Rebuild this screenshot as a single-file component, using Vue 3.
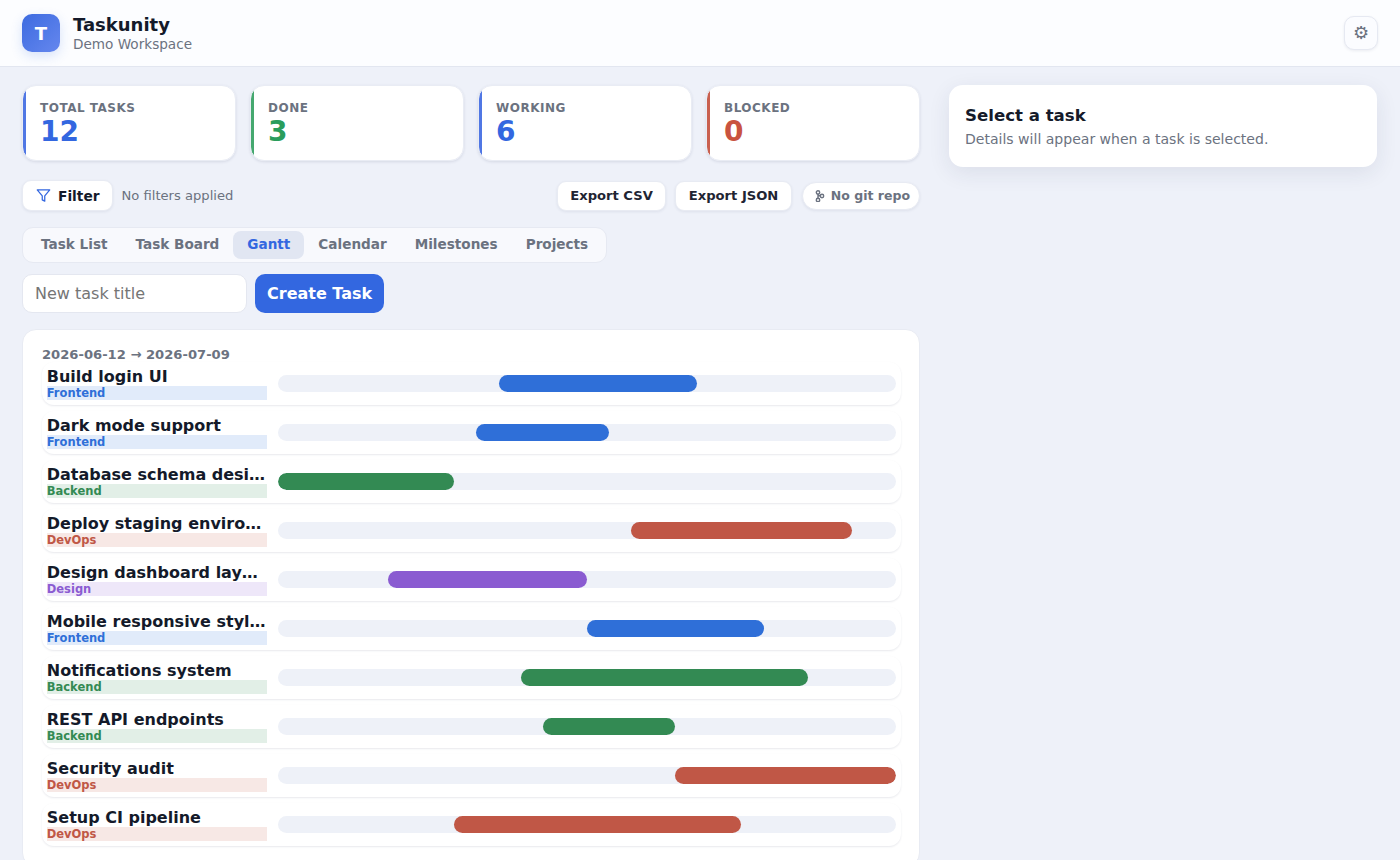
<script setup>
const stats = [
  { label: "Total Tasks", value: 12, accent: "#5077e4", color: "#3367e0" },
  { label: "Done", value: 3, accent: "#45a86f", color: "#2a9d5c" },
  { label: "Working", value: 6, accent: "#5077e4", color: "#3367e0" },
  { label: "Blocked", value: 0, accent: "#c9604f", color: "#c9533f" }
]

const tabs = ["Task List", "Task Board", "Gantt", "Calendar", "Milestones", "Projects"]

const colors = {
  Frontend: { text: "#2f6fd8", bg: "#e1ebfa" },
  Backend: { text: "#338a53", bg: "#e2efe7" },
  DevOps: { text: "#c05746", bg: "#f7e8e5" },
  Design: { text: "#8a5bd1", bg: "#eee7f9" }
}

const totalDays = 28

const tasks = [
  { title: "Build login UI", team: "Frontend", start: 10, days: 9 },
  { title: "Dark mode support", team: "Frontend", start: 9, days: 6 },
  { title: "Database schema design", team: "Backend", start: 0, days: 8 },
  { title: "Deploy staging environment", team: "DevOps", start: 16, days: 10 },
  { title: "Design dashboard layout", team: "Design", start: 5, days: 9 },
  { title: "Mobile responsive styling", team: "Frontend", start: 14, days: 8 },
  { title: "Notifications system", team: "Backend", start: 11, days: 13 },
  { title: "REST API endpoints", team: "Backend", start: 12, days: 6 },
  { title: "Security audit", team: "DevOps", start: 18, days: 10 },
  { title: "Setup CI pipeline", team: "DevOps", start: 8, days: 13 }
]

function barStyle(task) {
  return {
    marginLeft: (task.start / totalDays) * 100 + "%",
    width: (task.days / totalDays) * 100 + "%",
    background: colors[task.team].text
  }
}
</script>

<template>
  <div class="app">
    <header class="topbar">
      <div class="brand">
        <div class="logo">T</div>
        <div>
          <div class="brand-name">Taskunity</div>
          <div class="brand-sub">Demo Workspace</div>
        </div>
      </div>
      <button class="settings">⚙</button>
    </header>

    <main class="layout">
      <section class="left">
        <div class="stats">
          <div
            v-for="stat in stats"
            :key="stat.label"
            class="stat"
            :style="{ '--accent': stat.accent }"
          >
            <div class="stat-label">{{ stat.label }}</div>
            <div class="stat-value" :style="{ color: stat.color }">{{ stat.value }}</div>
          </div>
        </div>

        <div class="toolbar">
          <button class="filter-btn">
            <svg width="15" height="15" viewBox="0 0 24 24" fill="none" stroke="#3367e0" stroke-width="2" stroke-linejoin="round" stroke-linecap="round">
              <path d="M22 3H2l8 9.46V19l4 2v-8.54L22 3z" />
            </svg>
            Filter
          </button>
          <span class="filter-note">No filters applied</span>
          <div class="toolbar-right">
            <button class="small-btn">Export CSV</button>
            <button class="small-btn">Export JSON</button>
            <span class="git-pill">
              <svg width="12" height="12" viewBox="0 0 24 24" fill="none" stroke="#6b7280" stroke-width="2.8" stroke-linecap="round">
                <circle cx="8" cy="5" r="3.4" />
                <circle cx="8" cy="20" r="3.4" />
                <circle cx="16" cy="12" r="3.4" />
                <path d="M8 8v9M8 9c1 2 2 3 5 3" />
              </svg>
              No git repo
            </span>
          </div>
        </div>

        <nav class="tabs">
          <button
            v-for="tab in tabs"
            :key="tab"
            class="tab"
            :class="{ active: tab === 'Gantt' }"
          >
            {{ tab }}
          </button>
        </nav>

        <div class="create-row">
          <input class="title-input" placeholder="New task title" />
          <button class="create-btn">Create Task</button>
        </div>

        <div class="gantt">
          <div class="gantt-range">2026-06-12 → 2026-07-09</div>
          <div class="gantt-rows">
            <div v-for="task in tasks" :key="task.title" class="gantt-row">
              <div class="gantt-info">
                <div class="gantt-title">{{ task.title }}</div>
                <div
                  class="gantt-team"
                  :style="{ color: colors[task.team].text, background: colors[task.team].bg }"
                >
                  {{ task.team }}
                </div>
              </div>
              <div class="gantt-track">
                <div class="gantt-bar" :style="barStyle(task)"></div>
              </div>
            </div>
          </div>
        </div>
      </section>

      <aside class="right">
        <div class="detail">
          <h2>Select a task</h2>
          <p>Details will appear when a task is selected.</p>
        </div>
      </aside>
    </main>
  </div>
</template>

<style>
html,
body {
  margin: 0;
  height: 100%;
  overflow: hidden;
  background: #eef1f9;
}
</style>

<style scoped>
.app {
  height: 860px;
  overflow: hidden;
  font-family: "DejaVu Sans", sans-serif;
  color: #141a2a;
  background: #eef1f9;
}

button,
input {
  font-family: inherit;
}

.topbar {
  height: 66px;
  padding: 0 22px;
  display: flex;
  align-items: center;
  justify-content: space-between;
  background: #fcfdff;
  border-bottom: 1px solid #e2e6f0;
}

.brand {
  display: flex;
  align-items: center;
  gap: 13px;
}

.logo {
  width: 38px;
  height: 38px;
  border-radius: 10px;
  display: flex;
  align-items: center;
  justify-content: center;
  color: #fff;
  font-size: 18px;
  font-weight: 700;
  background: linear-gradient(135deg, #3d6be0, #6587ee);
  box-shadow: 0 4px 12px rgba(51, 103, 224, 0.18);
}

.brand-name {
  font-size: 18px;
  font-weight: 700;
  line-height: 23px;
}

.brand-sub {
  font-size: 13.6px;
  line-height: 17px;
  color: #6b7280;
}

.settings {
  width: 34px;
  height: 34px;
  padding: 0 0 2px;
  border: 1px solid #e6e9f2;
  border-radius: 10px;
  background: #fbfcff;
  color: #6b7280;
  font-size: 18px;
  box-shadow: 0 1px 3px rgba(30, 40, 80, 0.08);
}

.layout {
  display: grid;
  grid-template-columns: 898px 428px;
  gap: 29px;
  padding: 18px 22px;
  align-items: start;
}

.left {
  display: flex;
  flex-direction: column;
  min-width: 0;
}

.stats {
  display: grid;
  grid-template-columns: repeat(4, 1fr);
  gap: 14px;
}

.stat {
  height: 76px;
  box-sizing: border-box;
  padding: 14px 13px 0 17px;
  border: 1px solid #e9ecf4;
  border-radius: 14px;
  background: linear-gradient(90deg, var(--accent) 3px, #fff 3px);
  box-shadow: 0 1px 3px rgba(30, 40, 80, 0.12);
}

.stat-label {
  font-size: 12px;
  font-weight: 700;
  line-height: 16px;
  letter-spacing: 0.5px;
  text-transform: uppercase;
  color: #6b7280;
}

.stat-value {
  font-size: 28px;
  font-weight: 700;
  line-height: 31px;
}

.toolbar {
  margin-top: 19px;
  height: 31px;
  display: flex;
  align-items: center;
  gap: 9px;
}

.filter-btn {
  height: 31px;
  padding: 0 12px 0 13px;
  display: flex;
  align-items: center;
  gap: 7px;
  border: 1px solid #e8ebf3;
  border-radius: 9px;
  background: #fff;
  color: #141a2a;
  font-size: 13.76px;
  font-weight: 700;
  box-shadow: 0 1px 3px rgba(30, 40, 80, 0.08);
}

.filter-note {
  font-size: 13.12px;
  color: #6b7280;
}

.toolbar-right {
  margin-left: auto;
  display: flex;
  align-items: center;
  gap: 9px;
}

.small-btn {
  height: 30px;
  padding: 0 12.5px;
  border: 1px solid #e8ebf3;
  border-radius: 9px;
  background: #fff;
  color: #1f2533;
  font-size: 13.12px;
  font-weight: 700;
  box-shadow: 0 1px 3px rgba(30, 40, 80, 0.08);
}

.git-pill {
  height: 26px;
  margin-left: 1px;
  padding: 0 9px 0 11px;
  display: flex;
  align-items: center;
  gap: 5px;
  border: 1px solid #e8ebf3;
  border-radius: 14px;
  background: #fff;
  color: #6b7280;
  font-size: 12.5px;
  font-weight: 700;
  box-shadow: 0 1px 3px rgba(30, 40, 80, 0.08);
}

.tabs {
  margin-top: 16px;
  align-self: flex-start;
  height: 36px;
  box-sizing: border-box;
  padding: 3px 4px;
  display: flex;
  align-items: center;
  border: 1px solid #e6e9f2;
  border-radius: 11px;
  background: #f8f9fd;
}

.tab {
  height: 28px;
  padding: 0 14px 2px;
  border: 0;
  border-radius: 8px;
  background: transparent;
  color: #6b7280;
  font-size: 13.6px;
  font-weight: 700;
}

.tab.active {
  background: #e1e6f2;
  color: #3367e0;
}

.create-row {
  margin-top: 11px;
  display: flex;
  align-items: center;
  gap: 8px;
}

.title-input {
  width: 225px;
  height: 39px;
  box-sizing: border-box;
  padding: 0 12px;
  border: 1px solid #e4e7f0;
  border-radius: 10px;
  background: #fff;
  font-size: 16px;
  outline: none;
}

.create-btn {
  height: 39px;
  padding: 0 12px;
  border: 0;
  border-radius: 10px;
  background: #3367e0;
  color: #fff;
  font-size: 16px;
  font-weight: 700;
}

.gantt {
  margin-top: 16px;
  padding: 17px 18px 20px 19px;
  border: 1px solid #e8ebf3;
  border-radius: 14px;
  background: #fff;
}

.gantt-range {
  font-size: 13.12px;
  font-weight: 700;
  line-height: 15px;
  color: #6b7280;
}

.gantt-rows {
  display: flex;
  flex-direction: column;
  gap: 6px;
}

.gantt-row {
  height: 43px;
  box-sizing: border-box;
  padding: 0 5px 1px 4.75px;
  display: flex;
  align-items: center;
  gap: 11px;
  border-radius: 12px;
  box-shadow: 0 1px 2px rgba(30, 40, 80, 0.1);
}

.gantt-info {
  width: 220px;
  flex-shrink: 0;
}

.gantt-title {
  font-size: 16px;
  font-weight: 700;
  line-height: 19px;
  white-space: nowrap;
  overflow: hidden;
  text-overflow: ellipsis;
}

.gantt-team {
  font-size: 11.5px;
  font-weight: 700;
  line-height: 14px;
}

.gantt-track {
  flex: 1;
  height: 17px;
  border-radius: 9px;
  background: #eef1f8;
  overflow: hidden;
}

.gantt-bar {
  height: 100%;
  border-radius: 9px;
}

.detail {
  height: 82px;
  padding: 20px 16px 0 16px;
  box-sizing: border-box;
  border-radius: 14px;
  background: #fff;
  box-shadow: 0 6px 22px rgba(30, 40, 80, 0.09);
}

.detail h2 {
  margin: 0;
  font-size: 16.6px;
  font-weight: 700;
  line-height: 22px;
}

.detail p {
  margin: 4px 0 0;
  font-size: 14.04px;
  line-height: 17px;
  color: #6b7280;
}
</style>
